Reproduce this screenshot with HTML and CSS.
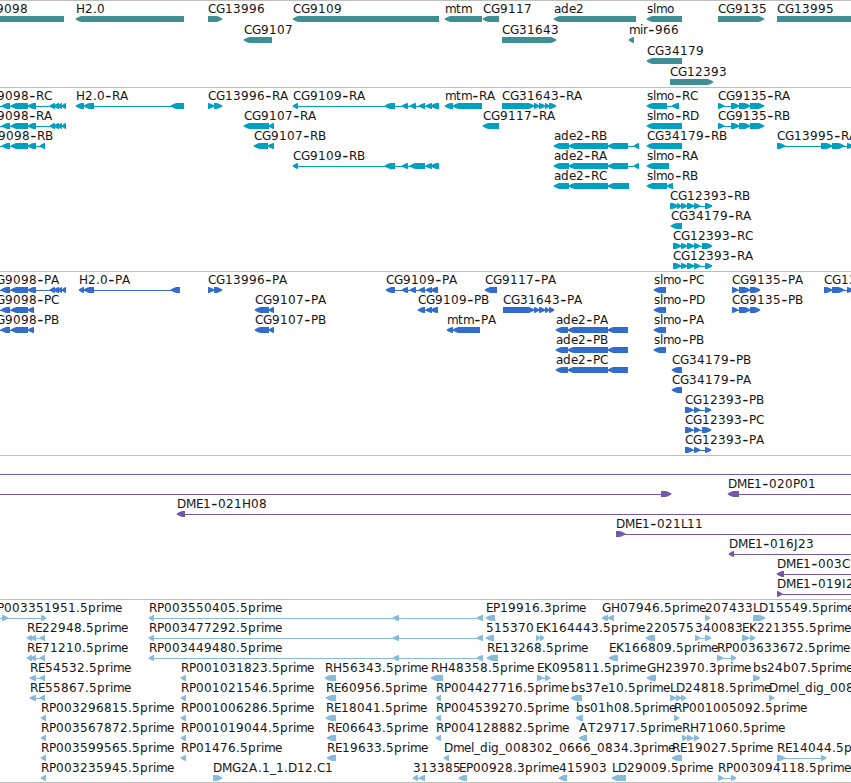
FILE: index.html
```html
<!DOCTYPE html>
<html lang="en">
<head>
<meta charset="utf-8">
<title>Genome browser</title>
<link rel="stylesheet" href="styles.css">
</head>
<body>
<main class="browser">
  <section class="track genes" data-track="genes"></section>
  <section class="track transcripts" data-track="transcripts"></section>
  <section class="track proteins" data-track="proteins"></section>
  <section class="track clones" data-track="clones"></section>
  <section class="track ests" data-track="ests"></section>
</main>
<script src="tracks.js"></script>
</body>
</html>
```

FILE: styles.css
```css
* { box-sizing: border-box; }

body {
  margin: 0;
  background: #fff;
  overflow: hidden;
}

.browser {
  display: flex;
  flex-direction: column;
  width: 851px;
  height: 783px;
  overflow: hidden;
  border-bottom: 1px solid #bdbdbd;
}

.track {
  flex: none;
  border-top: 1px solid #bdbdbd;
  overflow: hidden;
}

.genes { height: 87px; color: #3f8e94; }
.transcripts { height: 184px; color: #00a0c0; }
.proteins { height: 184px; color: #316dcc; }
.clones { height: 144px; color: #7557a8; }
.ests { height: 183px; color: #87bbdd; }

.canvas {
  display: block;
  width: 851px;
  height: 100%;
}

.glyph { fill: currentColor; }

.label {
  fill: #141414;
  font-family: "DejaVu Sans", sans-serif;
  font-size: 12px;
  font-kerning: none;
}

.dash { font-size: 17px; }
```

FILE: tracks.js
```js
// Feature: row | label | label x | strand | blocks | optional line extent
const TRACKS = {
  genes: `
0|CG9098|-21|-|-20-64
0|H2.0|76|-|76-184
0|CG13996|208|+|208-222
1|CG9107|244|-|244-272
0|CG9109|293|-|293-439
0|mtm|445|-|445-482
0|CG9117|483|-|483-499
1|CG31643|502|+|502-556
0|ade2|554|-|554-636
1|mir-966|629|-|629-634
0|slmo|647|-|647-682
2|CG34179|647|-|647-682
3|CG12393|670|+|670-713
0|CG9135|718|+|718-764
0|CG13995|777|+|777-870`,
  transcripts: `
0|CG9098-RC|-20|-|2-10,11-28,28-36,50-55,54-59,58-62,62-66|-5-66
1|CG9098-RA|-20|-|2-10,11-28,28-36,50-55,54-59,58-62,62-66|-5-66
2|CG9098-RB|-19|-|2-10,11-28,28-36,40-45|-5-45
0|H2.0-RA|76|-|76-84,84-94,171-184
0|CG13996-RA|208|+|208-214,214-222
1|CG9107-RA|244|-|244-269,269-274
2|CG9107-RB|254|-|254-268,268-274
0|CG9109-RA|293|-|293-298,385-395,402-408,410-416,419-425,426-432,431-439
3|CG9109-RB|293|-|293-298,385-395,402-408,410-425,426-432,431-439
0|mtm-RA|445|-|445-453,453-482
1|CG9117-RA|483|-|483-499
0|CG31643-RA|502|+|502-534,534-539,539-545,545-549,549-556
2|ade2-RB|554|-|554-569,569-608,608-628,634-639
3|ade2-RA|554|-|554-569,569-608,608-628,634-639
4|ade2-RC|554|-|554-569,569-608,608-629
0|slmo-RC|647|-|647-667,672-679
1|slmo-RD|647|-|647-682
2|CG34179-RB|647|-|647-682
3|slmo-RA|647|-|647-669
4|slmo-RB|647|-|647-667,667-673
5|CG12393-RB|670|+|670-678,677-681,681-687,687-694,694-700,705-712
6|CG34179-RA|671|-|671-682
7|CG12393-RC|673|+|673-681,681-687,687-694,694-700,702-712
8|CG12393-RA|673|+|673-681,681-687,687-694,694-700,705-712
0|CG9135-RA|718|+|718-724,731-739,739-750,750-764
1|CG9135-RB|718|+|718-724,731-739,739-750,750-764
2|CG13995-RA|777|+|777-785,821-832,832-844,847-853|777-870`,
  proteins: `
0|CG9098-PA|-12|-|1-10,11-28,28-36,50-55,54-59,58-62,62-66|-5-66
1|CG9098-PC|-12|-|1-10,11-28,28-34|-5-34
2|CG9098-PB|-12|-|1-10,11-28,28-34|-5-34
0|H2.0-PA|79|-|79-84,84-94,171-180
0|CG13996-PA|208|+|208-214,214-222
1|CG9107-PA|255|-|255-269,269-274
2|CG9107-PB|255|-|255-269,269-274
0|CG9109-PA|386|-|386-395,402-408,410-416,419-425,426-432,431-438
1|CG9109-PB|418|-|418-425,426-432,431-438
2|mtm-PA|447|-|447-453,453-480
0|CG9117-PA|485|-|485-497
1|CG31643-PA|503|+|503-534,534-539,539-545,545-549,549-554
2|ade2-PA|556|-|556-568,568-608,608-628
3|ade2-PB|556|-|556-568,568-608,608-628
4|ade2-PC|556|-|556-568,568-608,608-628
0|slmo-PC|654|-|654-666
1|slmo-PD|654|-|654-666
2|slmo-PA|654|-|654-666
3|slmo-PB|654|-|654-666
4|CG34179-PB|672|-|672-682
5|CG34179-PA|672|-|672-682
6|CG12393-PB|685|+|685-693,694-700,705-711
7|CG12393-PC|685|+|685-693,694-700,702-711
8|CG12393-PA|685|+|685-693,694-700,705-711
0|CG9135-PA|732|+|732-738,739-750,750-760
1|CG9135-PB|732|+|732-738,739-750,750-760
0|CG13995-PA|824|+|824-832,832-844,847-853|824-870`,
  clones: `
0||0|+||-5-870
1||0|+|661-671|-5-671
1|DME1-020P01|728|-|728-739|728-870
2|DME1-021H08|177|-|177-185|177-870
3|DME1-021L11|616|+|616-625|616-870
4|DME1-016J23|729|-|729-734|729-870
5|DME1-003C|777|-|777-784|777-870
6|DME1-019I2|777|+|777-782|777-870`,
  ests: `
0|RP003351951.5prime|-11|+|2-8,41-46|-5-46
1|RE22948.5prime|27|-|27-32,31-36,40-45
2|RE71210.5prime|27|-|27-32,31-36,40-45
3|RE54532.5prime|30|-|30-36,40-45
4|RE55867.5prime|30|-|30-36,40-45
5|RP003296815.5prime|41|-|41-46
6|RP003567872.5prime|41|-|41-46
7|RP003599565.5prime|41|-|41-46
8|RP003235945.5prime|41|-|41-46
0|RP003550405.5prime|149|-|149-154,393-399,477-483
1|RP003477292.5prime|149|-|149-154,393-399,477-483
2|RP003449480.5prime|149|-|149-154,393-399,477-483
3|RP001031823.5prime|181|-|181-186
4|RP001021546.5prime|181|-|181-186
5|RP001006286.5prime|181|-|181-186
6|RP001019044.5prime|181|-|181-186
7|RP01476.5prime|181|-|181-186
8|DMG2A.1_1.D12.C1|213|+|213-222
3|RH56343.5prime|325|-|325-336
4|RE60956.5prime|326|-|326-336
5|RE18041.5prime|326|-|326-336
6|RE06643.5prime|327|-|327-336
7|RE19633.5prime|327|-|327-336
3|RH48358.5prime|431|-|431-443
4|RP004427716.5prime|436|-|436-441
5|RP004539270.5prime|436|-|436-441
6|RP004128882.5prime|436|-|436-441
7|Dmel_dig_008302_0666_0834.3prime|444|-|444-449
8|313385|413|-|413-418,419-425
8|EP00928.3prime|459|-|459-467
8|415903|559|-|559-567
0|EP19916.3prime|486|-|486-495
1|515370|486|-|486-494
2|RE13268.5prime|487|-|487-498
1|EK164443.5prime|536|+|536-540,540-544
3|EK095811.5prime|537|+|537-543,545-550
0|GH07946.5prime|602|-|602-608,608-614
0|207433|705|+|705-710
0|LD15549.5prime|753|+|753-765
1|220575|646|-|646-655
1|340083|695|+|695-700,705-711
1|EK221355.5prime|742|+|742-749,750-755
2|EK166809.5prime|609|-|609-618
2|RP003633672.5prime|717|+|717-723,731-736
3|GH23970.3prime|647|-|647-656
3|bs24b07.5prime|753|+|753-760
4|bs37e10.5prime|571|-|571-582
4|LD24818.5prime|670|+|670-676,676-681,681-686
4|Dmel_dig_008302|769|+|769-774
5|bs01h08.5prime|576|-|576-583
5|RP001005092.5prime|674|+|674-679
6|AT29717.5prime|579|-|579-587
6|RH71060.5prime|682|+|682-687,687-693,694-699
7|RE19027.5prime|672|-|672-682
7|RE14044.5prime|777|+|777-785,821-826
8|LD29009.5prime|612|-|612-626
8|RP003094118.5prime|718|+|718-723,731-736`
};

// Whole-pixel advance of each label character
const ADVANCE = { C: 8, G: 9, H: 9, R: 8, A: 9, B: 8, D: 9, M: 10, E: 7, L: 6, P: 7, K: 8, T: 8, J: 4, I: 4,
  '-': 7, '.': 4, _: 6, m: 11, t: 5, a: 7, d: 8, e: 7, s: 6, l: 3, o: 8, i: 3, r: 5, p: 8, g: 8, b: 8, h: 8 };
const NS = 'http://www.w3.org/2000/svg';

function add(parent, name, attrs, text) {
  const node = document.createElementNS(NS, name);
  for (const key in attrs) node.setAttribute(key, attrs[key]);
  if (text) node.textContent = text;
  parent.appendChild(node);
  return node;
}

function span(text) {
  const m = text.match(/^(-?\d+)-(\d+)$/);
  return [Number(m[1]), Number(m[2])];
}

// Block with a slightly rounded point on its strand side
function arrow(a, b, strand, y) {
  const head = Math.min(b - a, 6);
  const left = strand === '-';
  const tip = left ? a : b;
  const tail = left ? b : a;
  const dir = left ? 1 : -1;
  const mid = y + 3;
  return [
    [tip - dir * 0.3, mid - 0.4], [tip + dir * head * 0.5, mid - 2.2], [tip + dir * head * 0.9, mid - 3], [tail, mid - 3],
    [tail, mid + 3], [tip + dir * head * 0.9, mid + 3], [tip + dir * head * 0.5, mid + 2.2], [tip - dir * 0.3, mid + 0.4]
  ].map(p => p.join(',')).join(' ');
}

function drawLabel(svg, label, x, baseline) {
  const text = add(svg, 'text', { class: 'label' });
  let pen = x;
  label.split(/(-)/).forEach(part => {
    const xs = [...part].map(ch => {
      const at = pen;
      pen += ADVANCE[ch] || 8;
      return at;
    });
    if (part === '-') add(text, 'tspan', { class: 'dash', x: xs[0] + 0.2, y: baseline + 1 }, part);
    else add(text, 'tspan', { x: xs.join(' '), y: baseline }, part);
  });
}

document.querySelectorAll('.track').forEach(track => {
  const name = track.dataset.track;
  const pitch = name === 'genes' ? 21 : 20;
  const svg = document.createElementNS(NS, 'svg');
  svg.setAttribute('class', 'canvas');
  track.appendChild(svg);
  TRACKS[name].trim().split('\n').forEach(line => {
    const [row, label, x, strand, blockText, extent] = line.split('|');
    const top = row * pitch;
    const blocks = blockText ? blockText.split(',').map(span) : [];
    const [from, to] = extent ? span(extent) : [blocks[0][0], blocks[blocks.length - 1][1]];
    if (blocks.length > 1 || extent) {
      // The connector stops short of the arrow tips at either end
      add(svg, 'rect', { class: 'glyph', x: from + 1, y: top + 18, width: to - from - 2, height: 1 });
    }
    blocks.forEach(([a, b]) => add(svg, 'polygon', { class: 'glyph', points: arrow(a, b, strand, top + 15) }));
    if (label) drawLabel(svg, label, Number(x), top + 12);
  });
});
```
